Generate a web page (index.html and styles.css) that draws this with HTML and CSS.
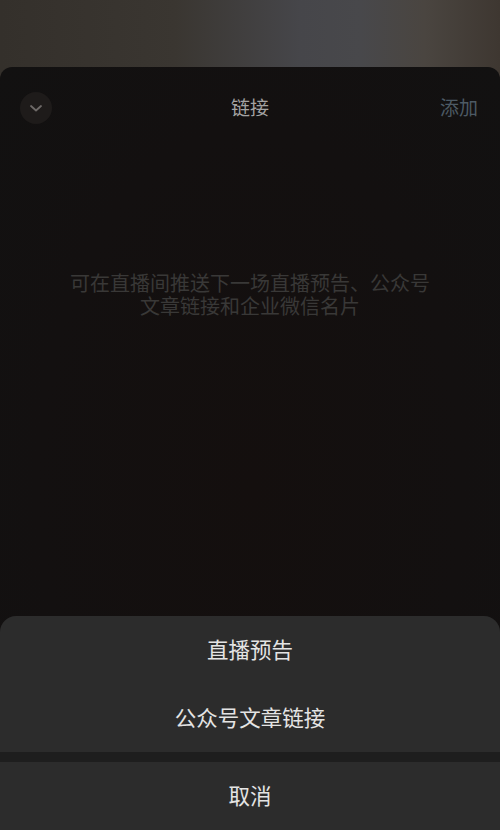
FILE: index.html
```html
<!DOCTYPE html>
<html lang="zh">
<head>
<meta charset="utf-8">
<link rel="stylesheet" href="styles.css">
</head>
<body>
<div class="screen">
  <div class="backdrop"></div>
  <div class="panel">
    <div class="header">
      <div class="close">
        <svg width="14" height="10" viewBox="0 0 14 10"><path d="M2 3 L7 7.5 L12 3" fill="none" stroke="#6e6a68" stroke-width="1.8" stroke-linecap="round" stroke-linejoin="round"/></svg>
      </div>
      <div class="title">链接</div>
      <div class="add">添加</div>
    </div>
    <p class="hint">可在直播间推送下一场直播预告、公众号<br>文章链接和企业微信名片</p>
  </div>
  <div class="sheet">
    <div class="item">直播预告</div>
    <div class="item">公众号文章链接</div>
    <div class="gap"></div>
    <div class="item cancel">取消</div>
  </div>
</div>
</body>
</html>
```
FILE: styles.css
```css
html, body {
  margin: 0;
  padding: 0;
}
body {
  width: 500px;
  height: 830px;
  overflow: hidden;
  font-family: "Noto Sans CJK SC", "Noto Sans", sans-serif;
  background: #141110;
}
.screen {
  position: relative;
  width: 500px;
  height: 830px;
  display: flex;
  flex-direction: column;
  background: linear-gradient(90deg, #34302b 0%, #3a3631 35%, #46464a 60%, #48484b 72%, #4a4540 85%, #3e3731 100%);
}
.backdrop {
  height: 67px;
  flex: none;
}
.panel {
  flex: 1;
  border-radius: 12px 12px 0 0;
  background: radial-gradient(ellipse at 50% 55%, #140f0e 0%, #131010 60%, #121111 100%);
  display: flex;
  flex-direction: column;
}
.header {
  height: 82px;
  display: flex;
  align-items: center;
  justify-content: space-between;
  padding: 0 22px 0 20px;
  position: relative;
}
.close {
  width: 32px;
  height: 32px;
  border-radius: 50%;
  background: #1e1b1a;
  display: flex;
  align-items: center;
  justify-content: center;
}
.title {
  position: absolute;
  left: 0;
  right: 0;
  text-align: center;
  font-size: 19px;
  color: #a3a3a3;
  padding-bottom: 4px;
  pointer-events: none;
}
.add {
  font-size: 19px;
  color: #4d5a64;
  padding-bottom: 4px;
}
.hint {
  margin: 122px 0 0;
  text-align: center;
  font-size: 20px;
  line-height: 23px;
  color: #393837;
}
.sheet {
  position: absolute;
  left: 0;
  right: 0;
  bottom: 0;
  background: #2c2c2c;
  border-radius: 16px 16px 0 0;
  display: flex;
  flex-direction: column;
}
.item {
  height: 68px;
  box-sizing: border-box;
  padding-bottom: 4px;
  display: flex;
  align-items: center;
  justify-content: center;
  font-size: 21.5px;
  color: #e4e4e4;
}
.gap {
  height: 10px;
  background: #1e1e1e;
}
```
